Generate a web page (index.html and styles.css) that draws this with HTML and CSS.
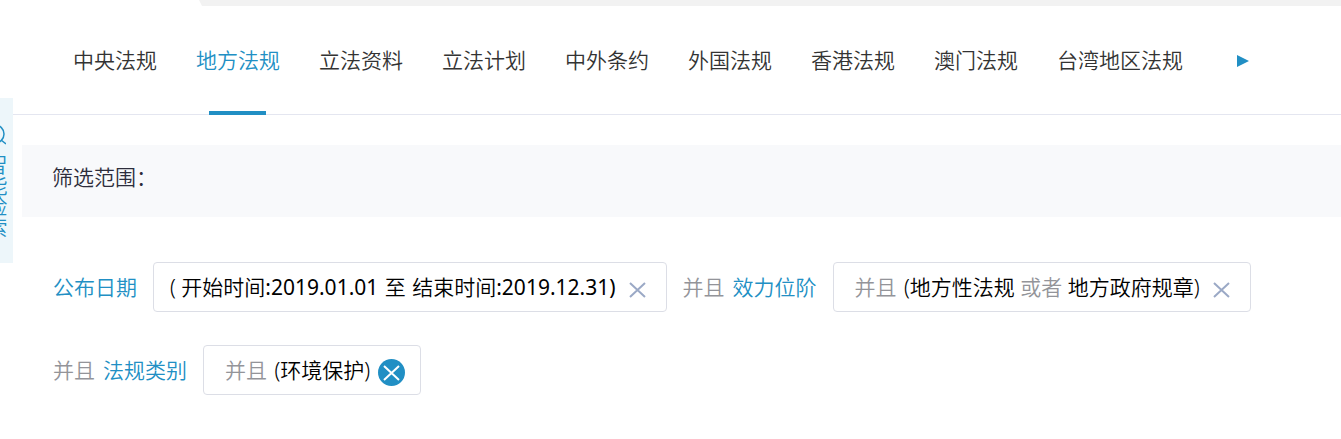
FILE: index.html
```
<!DOCTYPE html>
<html lang="zh-CN">
<head>
<meta charset="UTF-8">
<meta name="viewport" content="width=device-width, initial-scale=1.0">
<title>地方法规</title>
<link rel="stylesheet" href="styles.css">
</head>
<body>
    <div class="top-strip"></div>
    <a class="side-search" href="#">
        <svg class="side-icon" viewBox="0 0 22 22" width="22" height="22" aria-hidden="true">
            <circle cx="11" cy="10" r="9"></circle>
            <path d="M17 16l5 4"></path>
        </svg>
        <span>智能检索</span>
    </a>
    <nav class="tabs">
        <a href="#">中央法规</a>
        <a href="#" class="active">地方法规</a>
        <a href="#">立法资料</a>
        <a href="#">立法计划</a>
        <a href="#">中外条约</a>
        <a href="#">外国法规</a>
        <a href="#">香港法规</a>
        <a href="#">澳门法规</a>
        <a href="#">台湾地区法规</a>
        <button class="next" aria-label="更多">
            <svg viewBox="0 0 12 12" width="12" height="12"><path d="M0 0l12 6L0 12z"></path></svg>
        </button>
    </nav>
    <main>
        <h1 class="range-title">筛选范围：</h1>
        <div class="filters">
            <div class="filter">
                <a href="#">公布日期</a>
                <div class="chip">
                    <span>( 开始时间<time>:2019.01.01</time> <span class="to">至</span> 结束时间<time>:2019.12.31)</time></span>
                    <button class="close" aria-label="删除">
                        <svg viewBox="0 0 27 27" width="27" height="27"><path d="M6 7l15 14M21 7L6 21"></path></svg>
                    </button>
                </div>
            </div>
            <div class="filter">
                <span class="logic">并且</span>
                <a href="#">效力位阶</a>
                <div class="chip joined">
                    <span><span class="logic first">并且</span> (地方性法规 <span class="logic">或者</span> 地方政府规章)</span>
                    <button class="close" aria-label="删除">
                        <svg viewBox="0 0 27 27" width="27" height="27"><path d="M6 7l15 14M21 7L6 21"></path></svg>
                    </button>
                </div>
            </div>
            <div class="filter">
                <span class="logic">并且</span>
                <a href="#">法规类别</a>
                <div class="chip joined">
                    <span><span class="logic first">并且</span> (环境保护)</span>
                    <button class="close current" aria-label="删除">
                        <svg viewBox="0 0 27 27" width="27" height="27"><path d="M6 7l15 14M21 7L6 21"></path></svg>
                    </button>
                </div>
            </div>
        </div>
    </main>
</body>
</html>
```
FILE: styles.css
```
* {
    box-sizing: border-box;
}
body {
    margin: 0;
    background: #fff;
    color: #000;
    font-family: "Noto Sans", "Noto Sans CJK SC", sans-serif;
    font-size: 21px;
    font-weight: 350;
    line-height: 30px;
    overflow-x: hidden;
}
a {
    color: #218fc4;
    text-decoration: none;
}
button {
    border: 0;
    padding: 0;
    background: none;
    cursor: pointer;
}
svg {
    display: block;
}
.top-strip {
    height: 6px;
    margin-left: 199px;
    background: #f2f2f2;
    clip-path: polygon(0 0, 100% 0, 100% 100%, 3px 100%);
}
/* search tab stuck to the left edge */
.side-search {
    position: absolute;
    left: 0;
    top: 98px;
    width: 13px;
    height: 165px;
    padding: 26px 7px 0 0;
    display: flex;
    flex-direction: column;
    align-items: flex-end;
    gap: 8px;
    overflow: hidden;
    background: #edf6fa;
    line-height: 21px;
}
.side-search span {
    writing-mode: vertical-rl;
    white-space: nowrap;
}
.side-icon {
    flex: none;
    fill: none;
    stroke: #218fc4;
    stroke-width: 1.5;
}
.tabs {
    display: flex;
    align-items: center;
    gap: 39px;
    height: 109px;
    margin-left: 13px;
    padding-left: 60px;
    border-bottom: 1px solid #e4e6f0;
}
.tabs a {
    position: relative;
    color: #333;
    white-space: nowrap;
}
.tabs a.active {
    color: #218fc4;
}
.tabs a.active::after {
    content: "";
    position: absolute;
    left: 13px;
    right: 14px;
    bottom: -40px;
    height: 4px;
    background: #218fc4;
}
.next {
    margin: 2px 0 0 15px;
    fill: #218fc4;
}
.range-title {
    margin: 30px 0 0 22px;
    padding: 17px 30px 25px;
    background: #f8f9fb;
    color: #2d2d3c;
    font-size: 21px;
    font-weight: 350;
    line-height: 30px;
}
.filters {
    display: flex;
    flex-wrap: wrap;
    gap: 33px 16px;
    padding: 45px 53px 44px;
}
.filter {
    display: flex;
    align-items: center;
    white-space: nowrap;
}
.filter > .logic {
    margin-right: 8px;
}
.logic {
    color: #939499;
}
.logic.first {
    margin-right: 2px;
}
.chip {
    display: flex;
    align-items: center;
    gap: 8px;
    height: 50px;
    margin-left: 16px;
    padding: 0 15px 0 16px;
    border: 1px solid #dcdee6;
    border-radius: 4px;
}
.chip.joined {
    padding-left: 21px;
}
.chip time {
    font-weight: 400;
}
.to {
    margin: 0 1px;
}
.close {
    margin-top: 4px;
    border-radius: 50%;
    fill: none;
    stroke: #9ba9c6;
    stroke-width: 2;
}
.close.current {
    background: #218fc4;
    stroke: #fff;
}
```
